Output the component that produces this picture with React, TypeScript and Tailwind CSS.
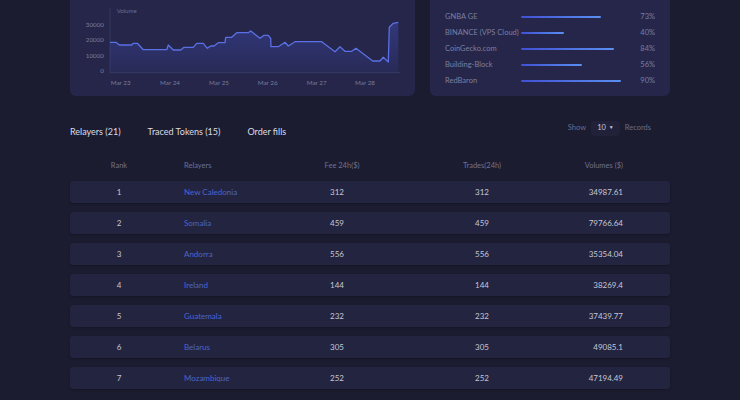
import React from 'react';

const POINTS: [number, number][] = [
    [40, 42.3], [46, 42.3], [49.3, 45], [61.7, 45], [63.3, 43.3], [67.3, 43.3], [73.3, 49.7],
    [96.7, 49.7], [98.3, 45], [103.3, 50], [110.7, 50], [114, 47.3], [123.3, 47.3], [126.7, 43.3],
    [133.3, 43.3], [137.3, 48.3], [140.7, 46], [144, 46], [148.3, 42.7], [155, 42.7], [155.7, 37.3],
    [161.7, 37.3], [166.7, 32.7], [178.3, 32.7], [180.7, 31], [190, 38.3], [194, 35.3], [198.3, 35.3],
    [200.7, 38.3], [201, 46.7], [208.3, 46.7], [215, 42.3], [218.3, 46], [225, 41.7], [251.7, 41.7],
    [265, 51.7], [270, 46.7], [275, 51.3], [281.7, 51.3], [286, 48.3], [302.7, 61], [310, 61],
    [313.3, 57.3], [318.3, 62], [319.3, 27.3], [323.3, 23.3], [328.3, 22.3],
];

const BASE = 72.7;

const Y_TICKS = [
    { label: '30000', y: 24.7 },
    { label: '20000', y: 39.7 },
    { label: '10000', y: 55.3 },
    { label: '0', y: 70.7 },
];

const X_TICKS = [
    { label: 'Mar 23', x: 40.7 },
    { label: 'Mar 24', x: 90 },
    { label: 'Mar 25', x: 139 },
    { label: 'Mar 26', x: 187.7 },
    { label: 'Mar 27', x: 236.7 },
    { label: 'Mar 28', x: 285 },
];

const SOURCES = [
    { name: 'GNBA GE', pct: 73 },
    { name: 'BINANCE (VPS Cloud)', pct: 40 },
    { name: 'CoinGecko.com', pct: 84 },
    { name: 'Building-Block', pct: 56 },
    { name: 'RedBaron', pct: 90 },
];

const ROWS = [
    { rank: 1, name: 'New Caledonia', fee: 312, trades: 312, volume: '34987.61' },
    { rank: 2, name: 'Somalia', fee: 459, trades: 459, volume: '79766.64' },
    { rank: 3, name: 'Andorra', fee: 556, trades: 556, volume: '35354.04' },
    { rank: 4, name: 'Ireland', fee: 144, trades: 144, volume: '38269.4' },
    { rank: 5, name: 'Guatemala', fee: 232, trades: 232, volume: '37439.77' },
    { rank: 6, name: 'Belarus', fee: 305, trades: 305, volume: '49085.1' },
    { rank: 7, name: 'Mozambique', fee: 252, trades: 252, volume: '47194.49' },
];

const VolumeChart: React.FC = () => {
    const line = POINTS.map(([x, y], i) => `${i ? 'L' : 'M'}${x} ${y}`).join(' ');
    const area = `${line} L328.3 ${BASE} L40 ${BASE} Z`;
    return (
        <svg width="345" height="96" viewBox="0 0 345 96" className="block">
            <defs>
                <linearGradient id="volFill" x1="0" y1="0" x2="0" y2="1">
                    <stop offset="0%" stopColor="#4a5ad8" stopOpacity="0.35" />
                    <stop offset="100%" stopColor="#4a5ad8" stopOpacity="0.08" />
                </linearGradient>
            </defs>
            <line x1="40" y1="8" x2="40" y2={BASE} stroke="#3a3c66" strokeWidth="0.8" />
            <line x1="40" y1={BASE} x2="330" y2={BASE} stroke="#3a3c66" strokeWidth="0.8" />
            <text x="46.7" y="12.5" fontSize="6" fill="#6c6e90" fontFamily="Lato, sans-serif">Volume</text>
            {Y_TICKS.map(t => (
                <text key={t.label} x="34" y={t.y + 2.2} fontSize="6.3" fill="#7a7c9c" textAnchor="end" fontFamily="Lato, sans-serif">
                    {t.label}
                </text>
            ))}
            {X_TICKS.map(t => (
                <text key={t.label} x={t.x} y="84.5" fontSize="6.3" fill="#7a7c9c" fontFamily="Lato, sans-serif">
                    {t.label}
                </text>
            ))}
            <path d={area} fill="url(#volFill)" />
            <path d={line} fill="none" stroke="#5a70e4" strokeWidth="1.3" strokeLinejoin="round" />
        </svg>
    );
};

export default function App() {
    return (
        <div className="min-h-screen bg-[#1b1c2f] font-['Lato',sans-serif] overflow-hidden">
            <div className="w-[600px] mx-auto">
                {/* Top cards */}
                <div className="flex gap-[15px] h-[96px]">
                    <div className="w-[345px] bg-[#25264a] rounded-b-md overflow-hidden">
                        <VolumeChart />
                    </div>
                    <div className="w-[240px] bg-[#25264a] rounded-b-md px-[15px] pt-[9px]">
                        {SOURCES.map(s => (
                            <div key={s.name} className="flex items-center h-[16px]">
                                <span className="w-[76px] text-[7.5px] text-[#7c7ea0] whitespace-nowrap">{s.name}</span>
                                <div className="w-[112px] h-[2.5px]">
                                    <div
                                        className="h-full rounded-full bg-gradient-to-r from-[#4150d4] to-[#5b8ff0]"
                                        style={{ width: `${s.pct * 1.13 - 2}px` }}
                                    />
                                </div>
                                <span className="flex-1 text-right text-[7.5px] text-[#7c7ea0]">{s.pct}%</span>
                            </div>
                        ))}
                    </div>
                </div>

                {/* Tabs + page size */}
                <div className="flex items-center justify-between mt-[20px] h-[24px]">
                    <div className="flex items-center gap-[27px] text-[9px] text-[#dcdce8] mt-[8px]">
                        <span>Relayers (21)</span>
                        <span>Traced Tokens (15)</span>
                        <span>Order fills</span>
                    </div>
                    <div className="flex items-center gap-[5px] text-[7.5px] text-[#6a6c8c] mr-[19px]">
                        <span>Show</span>
                        <span className="flex items-center gap-[3px] bg-[#212239] rounded px-[6px] h-[15px] text-[#c9c9dc]">
                            10 <span className="text-[5px]">▼</span>
                        </span>
                        <span>Records</span>
                    </div>
                </div>

                {/* Table header */}
                <div className="flex items-center h-[24px] mt-[14px] text-[7.5px] text-[#6f7192]">
                    <span className="w-[98px] text-center">Rank</span>
                    <span className="w-[102px] pl-[16px]">Relayers</span>
                    <span className="w-[144px] text-center">Fee 24h($)</span>
                    <span className="w-[136px] text-center">Trades(24h)</span>
                    <span className="w-[73px] text-right">Volumes ($)</span>
                </div>

                {/* Rows */}
                <div className="flex flex-col gap-[9px] mt-[3px]">
                    {ROWS.map(r => (
                        <div
                            key={r.rank}
                            className="flex items-center h-[22px] rounded-[3px] bg-[#23243f] text-[8px] text-[#c6c7d8] shadow-[0_1px_2px_rgba(0,0,0,0.25)]"
                        >
                            <span className="w-[98px] text-center">{r.rank}</span>
                            <span className="w-[102px] pl-[16px] text-[#4a64d0] whitespace-nowrap">{r.name}</span>
                            <span className="w-[134px] text-center">{r.fee}</span>
                            <span className="w-[156px] text-center">{r.trades}</span>
                            <span className="w-[63px] text-right">{r.volume}</span>
                        </div>
                    ))}
                </div>
            </div>
        </div>
    );
}
